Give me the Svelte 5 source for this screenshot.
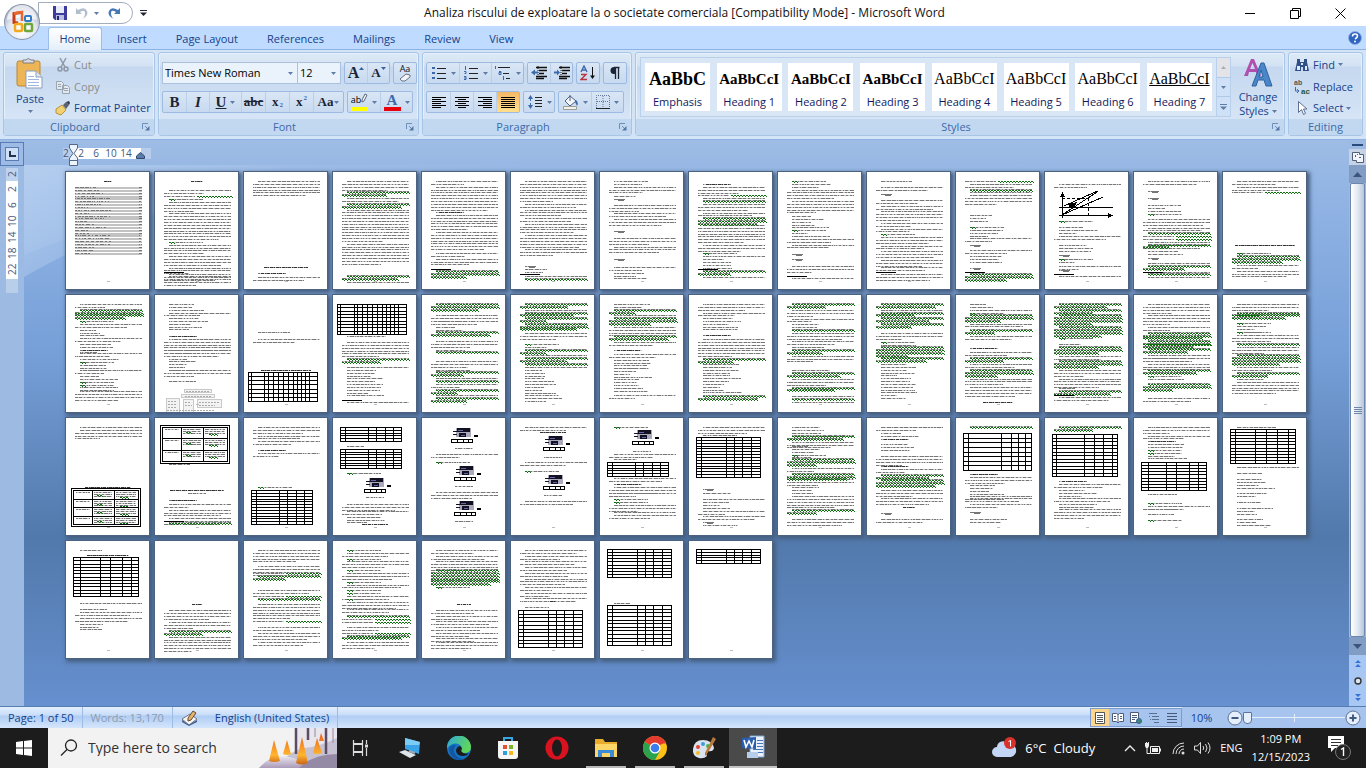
<script lang="ts">
	// Page thumbnails are written as short tokens, top to bottom:
	// @n jump to y, tN paragraph, gN flagged paragraph, rN half flagged line, lN list lines,
	// eN short flagged words, c centred heading, k bold heading, m formula, f footnote rule, aN contents lines
	// T:x:y:w:h:rows:cols table, O:x:y small chart, G graph, D organisation chart
	const pages = [
		'@9 c7 @15 a24',
		'@9 c12 @18 t2 r1 e1 @30 t4 t10 e1 t4 t4 t3 t4 @101 f t3',
		'@9 t6 @95 c44 @101 k @105 t2',
		'@9 t4 g2 t2 g2 t12 t8 @104 g2 t1',
		'@9 t2 t9 @40 k t6 t7 @81 t2 t3 @98 f g3',
		'@9 t8 t2 t3 t2 t4 t5 t3 @94 m l2 @103 f t1 g1',
		'@9 l2 t3 @24 l1 m @33 t3 @41 t2 @47 t3 @59 m @66 t3 t3 @87 m @95 t2 l3',
		'@12 k t3 r1 t1 g1 t3 t2 g3 @53 t7 t3 @81 e1 t1 @87 l4 @98 f g2 t1',
		'@9 e1 l2 t4 t5 @44 l5 e1 l2 t2 t2 @82 m @87 m @94 t3 @105 f t1',
		'@9 l1 @15 t2 @22 m @28 t2 t2 t4 t2 t2 e1 t3 t2 t3 t3 @95 t2 @101 f t3',
		'@9 r1 t2 g1 t1 t4 @43 l3 @55 e1 l3 t2 @73 m @78 t2 @84 l3 @96 m @101 f g3',
		'@12 t2 G @49 e1 @55 l3 @64 t2 @73 l3 @83 m @87 e1 l1 @94 t1 l1 @98 m @103 f t1',
		'@9 t2 @19 m @26 m @33 l3 e1 @47 t3 t2 g1 r2 t1 g2 @73 t2 l2 @86 m @91 t1 g2 t1 @101 f g1 t1',
		'@9 t2 t2 r1 @73 c60 @81 e1 g3 @93 t2 t3',
		'@9 t2 g4 e1 t2 l3 t2 l4 @55 k t2 @64 l1 e1 l3 @75 t2 @81 l2 e2 l2 @96 t4',
		'@9 l3 t2 @23 l5 @41 k t6 @55 t3 l5 @75 t3 @86 l1 D',
		'@37 l1 @44 t2 @75 c50 T:4:77:69:29:7:3,16,20,25,30,35,40,45,49,53,57,61',
		'T:4:9:69:30:9:3,17,20,25,30,35,40,45,49,53,57,61 @41 l1 @47 t6 g2 @72 t1 l10 @106 f t1',
		'@9 g3 @20 t3 @26 t2 l2 g2 @46 t3 l1 g1 @66 t3 l1 g2 t1 g1 @89 t2 g2 t1 g2',
		'@9 g2 t1 g2 @23 g2 g3 @38 t3 @49 e1 l1 g2 t1 g2 g1 @72 t1 l12',
		'@9 l2 g2 t1 g3 t4 @41 g2 t2 @55 k @59 t2 l4 @73 l9 @100 t2',
		'@9 t3 t2 @23 l5 @40 k @44 t7 g2 @69 l11 @101 g2',
		'@9 g2 @15 t3 t2 l2 @35 g1 t3 t2 l1 g2 t3 @75 l1 g2 @84 t3 g2 @101 t1 g1 t1',
		'@9 g2 t1 g2 g2 g2 @38 t3 @47 e1 l1 @52 g4 @63 g2 @69 l13',
		'@9 l2 t1 e1 @20 g3 t2 @35 g2 t2 @53 k @57 t2 @63 g2 t2 @75 g3 t3 @92 t4 @107 c30',
		'@9 g2 g2 @20 g4 @32 g4 e1 @49 l1 @52 g3 @61 t2 @66 g3 @75 t3 t4 @93 l1 g2 @101 f t2',
		'@9 t4 @20 t4 @32 t2 g3 g3 @49 g2 @54 g2 t2 @63 t2 t4 @75 g2 @81 e1 l1 @89 g3 @103 t2',
		'@9 t3 g2 @20 g2 @28 e1 l2 e1 @37 l1 t3 @49 g1 t3 @60 g4 @72 t2 g2 @84 l1 t5',
		'@9 t1 t4 @69 c46 T:7:72:65:34:4:19,41,65',
		'T:7:9:65:34:3:19,41,65 @46 l1 @72 c54 c18 @82 k @86 t2 t3 t3 @104 f g1',
		'@9 t3 t2 @23 t2 @32 k @35 t2 @69 e1 T:7:72:61:34:12:5,28,36,45,53',
		'T:7:9:61:14:5:5,28,36,45,53 @28 l1 T:7:31:61:19:7:5,28,36,45,53 @55 e1 O:36:60 @79 c18 @86 t3 @93 t2 l3 @106 c26',
		'O:34:10 @30 c18 @36 t2 @44 e1 O:37:48 @68 c18 @74 t3 O:37:83 @103 c18',
		'@9 t2 @14 c26 O:37:18 @39 c18 @44 t2 @53 e1 O:37:57 @77 c18 @83 t2',
		'@9 e1 O:37:12 @33 c18 t2 @41 l1 T:7:44:61:14:5:5,28,36,45,53 @60 t2 k @69 t3 @75 t2 e2 @87 t3 @94 t1 @97 t2',
		'@9 t3 @17 l1 T:7:19:64:40:14:5,30,38,46,55 @71 m @75 l1 @81 t1 l3 @93 t2 @98 t2 @104 m l1',
		'@9 l3 t2 @18 g2 t3 @28 l3 e1 l1 @41 g3 @50 t2 g3 @61 t3 @69 l3 @78 t5 g2 @101 t3',
		'@9 t2 l2 @21 k @26 l3 @38 t4 @48 k @51 t2 g2 g3 @72 t3 @80 t3 @89 c12 @95 m @101 t2',
		'@9 g1 T:7:15:68:37:8:5,38,48,55,62 @56 k t3 @67 l4 t2 @80 t2 @86 t2 @94 m @101 l2',
		'@9 g2 T:7:16:65:42:12:4,32,42,51,60 @63 k t2 @72 l3 @80 t2 l2 @91 t4',
		'@9 t3 t2 k l1 @29 l1 e2 l2 T:7:44:65:28:9:7,25,35,48,57 @76 l1 @85 e1 t2 @91 l1 @96 l1 @102 e1',
		'@9 l1 T:7:11:65:34:11:5,25,36,47,58 @49 t1 @55 l1 @61 l4 @75 l2 @84 l1 @90 l3 @101 l3',
		'@9 l1 @14 c42 T:7:16:65:39:12:7,27,37,49,58 @62 t1 @68 l1 @71 t2 @77 t2 l3',
		'@63 c10 @69 t4 @81 t3 @90 g2 t6',
		'@9 t5 @25 t4 @32 r1 g2 @49 t2 r1 g1 @63 t6 r1 @86 t2 @92 t3 @101 t2',
		'@9 e1 t2 e1 t3 @29 e1 t2 @35 t2 e1 t2 e2 t2 @58 e1 t3 @68 t2 @75 g1 r2 @86 t2 r1 g2 @101 t3',
		'@9 t2 t2 t4 @29 g6 e1 @63 c14 @69 t2 t2 t2 t2 t2 t2 @101 t3',
		'@9 t2 t2 t2 t2 t2 t3 t2 t2 t2 @60 c5 @66 l1 T:7:69:64:37:10:5,30,38,46,55',
		'T:7:8:64:28:9:5,30,38,46,55 @62 l1 T:7:64:64:40:11:5,30,38,46,55',
		'T:7:8:64:14:5:5,30,38,46,55'
	];

	function makeRandom(seed: number) {
		let s = seed * 7919 + 17;
		return () => {
			s = (s * 1103515245 + 12345) % 2147483648;
			return s / 2147483648;
		};
	}

	function drawPage(spec: string, index: number) {
		const rnd = makeRandom(index + 1);
		let y = 9;
		let ink = '';
		let soft = '';
		let wave = '';
		let bold = '';
		let band = '';
		let grid = '';
		let graph = false;
		let chart = false;
		const blocks: { x: number; y: number }[] = [];

		const words = (x1: number, x2: number, yy: number) => {
			soft += `M${x1} ${yy + 0.5}H${x2}`;
			let x = x1;
			while (x < x2) {
				const len = 1 + Math.floor(rnd() * 4);
				ink += `M${x} ${yy + 0.5}h${Math.min(len, x2 - x)}`;
				x += len + 1 + Math.floor(rnd() * 2);
			}
		};
		const zigzag = (x1: number, x2: number, yy: number) => {
			for (let x = x1; x < x2; x += 3) wave += `M${x} ${yy + 0.5}h2m0 1h1`;
		};

		for (const token of spec.split(' ')) {
			const kind = token[0];
			if (token.includes(':')) {
				const [, ...args] = token.split(':');
				const [x, ty, w, h, rows] = args.map(Number);
				if (kind === 'O') {
					blocks.push({ x, y: ty });
					continue;
				}
				grid += `M${x}.5 ${ty}.5h${w}v${h}h-${w}z`;
				for (let i = 1; i < rows; i++) grid += `M${x} ${ty + Math.round((h * i) / rows) + 0.5}h${w}`;
				for (const c of args[5].split(',')) grid += `M${x + Number(c) + 0.5} ${ty}v${h}`;
				if (rows < 5) {
					grid += `M${x - 1.5} ${ty - 1.5}h${w + 4}v${h + 4}h-${w + 4}z`;
					for (let i = 0; i < rows; i++) {
						const ry = ty + Math.round((h * i) / rows) + 2;
						words(x + 3, x + 17, ry);
						for (let j = 0; j < 3; j++) words(x + 21, x + 39, ry + j * 2);
						for (let j = 0; j < 3; j++) words(x + 43, x + 63, ry + j * 2);
						zigzag(x + 24, x + 30, ry + 3);
						zigzag(x + 47, x + 54, ry + 5);
					}
				}
				continue;
			}
			const n = Number(token.slice(1)) || 1;
			if (kind === '@') y = n;
			else if (kind === 'G') graph = true;
			else if (kind === 'D') chart = true;
			else if (kind === 'c') {
				words(42 - Math.round(n / 2), 42 + Math.round(n / 2), Math.round(y));
				// page titles are bold, captions under the small charts are not
				if (n !== 18) bold += `M${42 - Math.round(n / 2)} ${Math.round(y) + 0.5}h${n}`;
				y += 2.9;
			} else if (kind === 'k') {
				bold += `M17 ${Math.round(y) + 0.5}h24`;
				words(14, 42, Math.round(y));
				y += 2.9;
			} else if (kind === 'm') {
				words(14, 20, Math.round(y));
				ink += `M17 ${Math.round(y)}h8M18 ${Math.round(y) + 1}h6`;
				y += 2.9;
			} else if (kind === 'f') {
				grid += `M9 ${Math.round(y) - 0.5}h20`;
				y += 1;
			} else {
				for (let i = 0; i < n; i++) {
					const yy = Math.round(y);
					const end = i === n - 1 && n > 1 ? 34 + Math.floor(rnd() * 36) : 76;
					const start = i === 0 ? 14 : 9;
					if (kind === 't') words(start, end, yy);
					else if (kind === 'g') {
						words(start, end, yy - 1);
						zigzag(start, end, yy);
					} else if (kind === 'r') {
						words(9, 40, yy);
						zigzag(42, 76, yy);
					} else if (kind === 'e') {
						words(14, 48, yy);
						zigzag(14, 19, yy);
					} else if (kind === 'l') words(14, 30 + Math.floor(rnd() * 24), yy);
					else if (kind === 'a') {
						band += `M9 ${yy}.5h67`;
						words(9, 22 + Math.floor(rnd() * 24), yy);
						words(73, 76, yy);
					}
					y += 2.85;
				}
			}
		}
		return { ink, soft, wave, bold, band, grid, graph, chart, blocks };
	}

	const thumbs = pages.map(drawPage);

	const tabs = ['Insert', 'Page Layout', 'References', 'Mailings', 'Review', 'View'];
	const styles = [
		{ name: 'Emphasis', sample: 'AaBbC', look: 'big' },
		{ name: 'Heading 1', sample: 'AaBbCcI', look: 'strong' },
		{ name: 'Heading 2', sample: 'AaBbCcI', look: 'strong' },
		{ name: 'Heading 3', sample: 'AaBbCcI', look: 'strong' },
		{ name: 'Heading 4', sample: 'AaBbCcI', look: '' },
		{ name: 'Heading 5', sample: 'AaBbCcI', look: '' },
		{ name: 'Heading 6', sample: 'AaBbCcI', look: '' },
		{ name: 'Heading 7', sample: 'AaBbCcI', look: 'under' }
	];
	const aligns = [
		{ name: 'Align left', d: 'M1 2.5h14M1 4.5h9M1 6.5h14M1 8.5h9M1 10.5h14M1 12.5h9' },
		{ name: 'Center', d: 'M1 2.5h14M4 4.5h8M1 6.5h14M4 8.5h8M1 10.5h14M4 12.5h8' },
		{ name: 'Align right', d: 'M1 2.5h14M6 4.5h9M1 6.5h14M6 8.5h9M1 10.5h14M6 12.5h9' },
		{ name: 'Justify', d: 'M1 2.5h14M1 4.5h14M1 6.5h14M1 8.5h14M1 10.5h14M1 12.5h14' }
	];
</script>

{#snippet arrow()}
	<svg class="arrow" width="5" height="3" viewBox="0 0 5 3" aria-hidden="true"><path d="M0 0h5L2.500 3z" fill="#5f7ca8" /></svg>
{/snippet}

{#snippet launcher()}
	<button class="launcher" aria-label="Open dialog">
		<svg width="8" height="8" viewBox="0 0 8 8"><path d="M.5 6V.5H6M3 3l3 3" stroke="#6e8fb8" fill="none" /><path d="M7.500 3v4.500H3z" fill="#5577a5" /></svg>
	</button>
{/snippet}

<div class="window">
	<header class="titlebar">
		<button class="office" aria-label="Office Button">
			<svg width="38" height="38" viewBox="0 0 38 38">
				<defs>
					<radialGradient id="orb" cx=".5" cy=".75" r=".7"><stop offset="0" stop-color="#fff" /><stop offset=".6" stop-color="#dfe4ee" /><stop offset="1" stop-color="#9aa6bd" /></radialGradient>
				</defs>
				<circle cx="19" cy="19" r="17.500" fill="url(#orb)" stroke="#8792a8" />
				<path d="M4 17a15 15 0 0 1 30 0q-15-5-30 0z" fill="#fff" opacity=".7" />
				<path d="M18 9.500l-7 1v9l4 .5" fill="none" stroke="#c93c17" stroke-width="3" />
				<path d="M11 10.500l8-1.500v9" fill="none" stroke="#e8682e" stroke-width="2.500" />
				<rect x="22" y="13" width="6" height="5" rx="1" fill="#fff" fill-opacity=".6" stroke="#2f7cc4" stroke-width="2" />
				<rect x="12" y="21" width="7" height="7" rx="1" fill="#fff" fill-opacity=".6" stroke="#f2a91c" stroke-width="2.500" />
				<rect x="22" y="21" width="7" height="7" rx="1" fill="#fff" fill-opacity=".6" stroke="#6fa53a" stroke-width="2.500" />
			</svg>
		</button>
		<div class="quick">
			<button aria-label="Save">
				<svg width="14" height="14" viewBox="0 0 14 14"><path d="M0 0h14v14H2L0 12z" fill="#3d3b9c" /><path d="M3 0h8v7H3z" fill="#e8ecfa" /><path d="M3 9h8v5H3z" fill="#b9bfe0" /><path d="M4 10h2v4H4z" fill="#26246e" /></svg>
			</button>
			<button aria-label="Undo" class="undo">
				<svg width="14" height="13" viewBox="0 0 14 13"><path d="M1 1v6h6L5 5q5-3 5 1t-3 6q7-3 5-8T3 3z" fill="#b2bdcd" /></svg>
				{@render arrow()}
			</button>
			<button aria-label="Redo">
				<svg width="14" height="13" viewBox="0 0 14 13"><path d="M13 1v6H7l2-2Q4 2 4 6t3 6Q0 9 2 4t9-1z" fill="#4877b8" /></svg>
			</button>
		</div>
		<button class="customize" aria-label="Customize">
			<svg width="7" height="6" viewBox="0 0 7 6"><path d="M0 .5h7" stroke="#223" /><path d="M0 2.500h7L3.500 6z" fill="#223" /></svg>
		</button>
		<h1>Analiza riscului de exploatare la o societate comerciala [Compatibility Mode] - Microsoft Word</h1>
		<div class="controls">
			<button aria-label="Minimize"><svg width="11" height="11" viewBox="0 0 11 11"><path d="M0 5.500h10" stroke="#000" /></svg></button>
			<button aria-label="Restore"><svg width="11" height="11" viewBox="0 0 11 11"><path d="M.5 2.500h8v8h-8zM2.500 2.500v-2h8v8h-2" stroke="#000" fill="none" /></svg></button>
			<button aria-label="Close"><svg width="11" height="11" viewBox="0 0 11 11"><path d="M.5.5l10 10M10.500.5l-10 10" stroke="#000" /></svg></button>
		</div>
	</header>

	<nav class="tabs">
		<button class="tab active">Home</button>
		{#each tabs as tab}
			<button class="tab">{tab}</button>
		{/each}
		<button class="help" aria-label="Help">
			<svg width="14" height="14" viewBox="0 0 14 14"><circle cx="7" cy="7" r="6.500" fill="#2f63c0" stroke="#8fb0e4" /><path d="M4.500 5.500q0-2.500 2.500-2.500t2.500 2q0 1.500-2.500 3" fill="none" stroke="#fff" stroke-width="1.600" /><circle cx="7" cy="10.500" r="1" fill="#fff" /></svg>
		</button>
	</nav>

	<div class="ribbon">
		<section class="group clipboard">
			<div class="body">
				<button class="tall">
					<svg width="28" height="32" viewBox="0 0 28 32"><rect x="1" y="3" width="23" height="25" rx="2" fill="#edb556" stroke="#b98736" /><path d="M7 5V2h3q2-3 5 0h3v3z" fill="#d8dbe2" stroke="#7e7e85" /><path d="M10 13h10l6 6v11H10z" fill="#fff" stroke="#8a9dbd" /><path d="M20 13v6h6" fill="#dce6f5" stroke="#8a9dbd" /><path d="M12 18.500h6M12 21.500h11M12 24.500h11M12 27.500h11" stroke="#9db7de" /></svg>
					<span>Paste</span>
					{@render arrow()}
				</button>
				<div class="stack">
					<button class="row off">
						<svg width="16" height="16" viewBox="0 0 16 16"><path d="M5 1l5 9M11 1L6 10" stroke="#8d97a6" stroke-width="1.500" /><circle cx="5" cy="12" r="2" fill="none" stroke="#8d97a6" stroke-width="1.500" /><circle cx="11" cy="12" r="2" fill="none" stroke="#8d97a6" stroke-width="1.500" /></svg>
						Cut
					</button>
					<button class="row off">
						<svg width="16" height="16" viewBox="0 0 16 16"><path d="M1.500 2.500h5l2 2v6h-7zM7.500 6.500h5l2 2v6h-7z" fill="#e3e8ef" stroke="#9aa3b1" /><path d="M9 9.500h4M9 11.500h4M3 5.500h3M3 7.500h3" stroke="#9aa3b1" /></svg>
						Copy
					</button>
					<button class="row">
						<svg width="16" height="16" viewBox="0 0 16 16"><path d="M1 9l6-4 4 5-5 5-5-2z" fill="#f1d173" stroke="#b9923a" /><path d="M8 5l3-3 3 3-3 4z" fill="#59606e" /><path d="M11 2l3-1 1 2-1 2z" fill="#353b4b" /></svg>
						Format Painter
					</button>
				</div>
			</div>
			<footer><h2>Clipboard</h2>{@render launcher()}</footer>
		</section>

		<section class="group font">
			<div class="body rows">
				<div class="line">
					<div class="combos">
						<label class="combo face"><select aria-label="Font"><option>Times New Roman</option></select>{@render arrow()}</label>
						<label class="combo size"><select aria-label="Font size"><option>12</option></select>{@render arrow()}</label>
					</div>
					<div class="set">
						<button class="w22 serif grow" aria-label="Grow font">A<svg width="5" height="3" viewBox="0 0 5 3"><path d="M0 3h5L2.500 0z" fill="#3b62a0" /></svg></button>
						<button class="w22 serif shrink" aria-label="Shrink font">A<svg width="5" height="3" viewBox="0 0 5 3"><path d="M0 0h5L2.500 3z" fill="#3b62a0" /></svg></button>
					</div>
					<div class="set">
						<button class="w22 clear" aria-label="Clear formatting"><span>Aa</span><svg width="12" height="9" viewBox="0 0 12 9"><path d="M1 6l6-5 4 1v2L6 8H3z" fill="#f4f4f8" stroke="#667087" /></svg></button>
					</div>
				</div>
				<div class="line">
					<div class="set">
						<button class="w23 serif"><b>B</b></button>
						<button class="w23 serif"><i>I</i></button>
						<button class="w33 serif"><u>U</u>{@render arrow()}</button>
						<button class="w24 serif small"><s>abc</s></button>
						<button class="w24 serif small">x<sub>2</sub></button>
						<button class="w24 serif small">x<sup>2</sup></button>
						<button class="w30 serif small">Aa{@render arrow()}</button>
					</div>
					<div class="set">
						<button class="w33 mark" aria-label="Highlight">
							<span class="swatch ab">ab<svg width="7" height="10" viewBox="0 0 7 10"><path d="M1 7l3-6 2 1-3 6-2 1z" fill="#fff" stroke="#5a6478" /></svg></span>
							{@render arrow()}
						</button>
						<button class="w33 mark" aria-label="Font color">
							<span class="swatch letter">A</span>
							{@render arrow()}
						</button>
					</div>
				</div>
			</div>
			<footer><h2>Font</h2>{@render launcher()}</footer>
		</section>

		<section class="group para">
			<div class="body rows">
				<div class="line">
					<div class="set">
						<button class="w33" aria-label="Bullets"><svg width="16" height="16" viewBox="0 0 16 16"><path d="M1 2h3v2H1zM1 7h3v2H1zM1 12h3v2H1z" fill="#3d69ab" /><path d="M6 3.500h9M6 8.500h9M6 13.500h9" stroke="#222" /></svg>{@render arrow()}</button>
						<button class="w33" aria-label="Numbering"><svg width="16" height="16" viewBox="0 0 16 16"><path d="M2.500 1v4M1 6.500h2v2H1.500M1 11.500h2v3H1M1 13h2" stroke="#3d69ab" fill="none" /><path d="M6 3.500h9M6 8.500h9M6 13.500h9" stroke="#222" /></svg>{@render arrow()}</button>
						<button class="w33" aria-label="Multilevel list"><svg width="18" height="16" viewBox="0 0 18 16"><path d="M1.500 1v3M5 6.500h2v3H5v-2h2M9.500 11v4" stroke="#3d69ab" fill="none" /><path d="M4 2.500h12M9 8.500h6M12 13.500h4" stroke="#222" /></svg>{@render arrow()}</button>
					</div>
					<div class="set">
						<button class="w22" aria-label="Decrease indent"><svg width="16" height="16" viewBox="0 0 16 16"><path d="M5 2.500h11M8 5.500h8M8 8.500h5M5 11.500h11M5 13.500h8" stroke="#111" stroke-width="1.500" /><path d="M7 1v14" stroke="#111" stroke-dasharray="1 1" /><path d="M0 7.500l4-3v2h3v2H4v2z" fill="#3d69ab" /></svg></button>
						<button class="w22" aria-label="Increase indent"><svg width="16" height="16" viewBox="0 0 16 16"><path d="M5 2.500h11M8 5.500h8M8 8.500h5M5 11.500h11M5 13.500h8" stroke="#111" stroke-width="1.500" /><path d="M7 1v14" stroke="#111" stroke-dasharray="1 1" /><path d="M6 7.500l-3-3v2H0v2h3v2z" fill="#3d69ab" /></svg></button>
					</div>
					<div class="set">
						<button class="w22" aria-label="Sort"><svg width="16" height="16" viewBox="0 0 16 16"><path d="M1 7l3-6 3 6M2 5h4" stroke="#3d69ab" stroke-width="1.400" fill="none" /><path d="M1 9.500h5l-5 5h6" stroke="#b7353d" stroke-width="1.400" fill="none" /><path d="M12.500 2v11" stroke="#111" /><path d="M10 10.500h5L12.500 14z" fill="#111" /></svg></button>
					</div>
					<div class="set">
						<button class="w22" aria-label="Show marks"><svg width="12" height="14" viewBox="0 0 12 14"><path d="M10.500 1.500H5M6.500 1v12M9.500 1v12" stroke="#1b2536" stroke-width="1.300" fill="none" /><path d="M6 1H5a3.500 3.500 0 0 0 0 7h1z" fill="#1b2536" /></svg></button>
					</div>
				</div>
				<div class="line">
					<div class="set">
						{#each aligns as align, i}
							<button class="w23" class:on={i === 3} aria-label={align.name}><svg width="16" height="15" viewBox="0 0 16 15"><path d={align.d} stroke="#000" /></svg></button>
						{/each}
					</div>
					<div class="set">
						<button class="w30" aria-label="Line spacing"><svg width="16" height="16" viewBox="0 0 16 16"><path d="M3.500 3v10" stroke="#3d69ab" stroke-dasharray="4 2" /><path d="M1 5l2.500-4L6 5zM1 11l2.500 4L6 11z" fill="#3d69ab" /><path d="M8 3.500h7M8 6.500h7M8 9.500h7M8 12.500h7" stroke="#222" /></svg>{@render arrow()}</button>
					</div>
					<div class="set">
						<button class="w33" aria-label="Shading"><svg width="17" height="16" viewBox="0 0 17 16"><path d="M3 7l5-5 6 5-6 5z" fill="#f3f6fb" stroke="#4d6080" /><path d="M8 1v6" stroke="#4d6080" /><path d="M14 6q3 3 1 6l-2-4z" fill="#3d69ab" /><path d="M1.500 12.500h13v3h-13z" fill="#f2f2ea" stroke="#9a9f9a" /></svg>{@render arrow()}</button>
						<button class="w33" aria-label="Borders"><svg width="14" height="14" viewBox="0 0 14 14"><path d="M.5 13V.5h13V13M7 1v12M1 6.500h12" stroke="#66789a" stroke-dasharray="1 1" fill="none" /><path d="M0 13.500h14" stroke="#222" /></svg>{@render arrow()}</button>
					</div>
				</div>
			</div>
			<footer><h2>Paragraph</h2>{@render launcher()}</footer>
		</section>

		<section class="group styles">
			<div class="body">
				<div class="gallery">
					<div class="tiles">
						{#each styles as style}
							<button class="tile"><span class="sample {style.look}">{style.sample}</span><span class="name">{style.name}</span></button>
						{/each}
					</div>
					<div class="steps">
						<button class="dim" aria-label="Previous"><svg width="5" height="3" viewBox="0 0 5 3"><path d="M0 3h5L2.500 0z" fill="#a5adb8" /></svg></button>
						<button aria-label="Next">{@render arrow()}</button>
						<button aria-label="More"><svg width="7" height="6" viewBox="0 0 7 6"><path d="M0 .5h7" stroke="#5f7ca8" /><path d="M0 2.500h7L3.500 6z" fill="#5f7ca8" /></svg></button>
					</div>
				</div>
				<button class="tall change">
					<svg width="30" height="30" viewBox="0 0 30 30"><path d="M1 18L8 1h3l7 17h-4l-1-4H6l-1 4zM7 11h5L9.500 5z" fill="#b14fb0" fill-rule="evenodd" /><path d="M9 28L18 5h3l8 23h-6l-2-6h-6l-2 6zM16 19h4l-2-7z" fill="#4b86c8" stroke="#2f62a0" fill-rule="evenodd" /></svg>
					<span>Change</span>
					<span>Styles {@render arrow()}</span>
				</button>
			</div>
			<footer><h2>Styles</h2>{@render launcher()}</footer>
		</section>

		<section class="group editing">
			<div class="body">
				<div class="stack">
					<button class="row"><svg width="16" height="16" viewBox="0 0 16 16"><path d="M3 2h3v3h4V2h3v3l2 9H9v-4H7v4H1l2-9z" fill="#2f4f86" /><path d="M3 9h3v4H3zM11 9h2v4h-2zM7 6h2v2H7z" fill="#dfe9f8" /></svg>Find {@render arrow()}</button>
					<button class="row"><svg width="16" height="16" viewBox="0 0 16 16"><text x="0" y="6" font-size="7" font-weight="bold" font-family="Liberation Sans, sans-serif" fill="#555">ab</text><text x="7" y="15" font-size="8" font-weight="bold" font-family="Liberation Sans, sans-serif" fill="#27573a">ac</text><path d="M1.500 8v4H5M3 10l2 2-2 2" stroke="#3d69ab" fill="none" /></svg>Replace</button>
					<button class="row"><svg width="16" height="16" viewBox="0 0 16 16"><path d="M4.500 1.500v11l3-3 2 5 2-1-2-4.500h3.500z" fill="#fff" stroke="#5b6f92" /></svg>Select {@render arrow()}</button>
				</div>
			</div>
			<footer><h2>Editing</h2></footer>
		</section>
	</div>

	<main class="work">
		<aside class="side">
			<button class="corner" aria-label="Tab stop"><svg width="7" height="6" viewBox="0 0 7 6"><path d="M1 0v5h6" stroke="#23324d" stroke-width="2" fill="none" /></svg></button>
			<div class="vruler">
				<span class="margin">2</span>
				<div class="scale"><span>2</span><span>6</span><span>10</span><span>14</span><span>18</span><span>22</span></div>
				<span class="tail"></span>
			</div>
		</aside>

		<div class="canvas">
			<svg class="swoosh" viewBox="0 0 500 540" preserveAspectRatio="none" aria-hidden="true">
				<defs>
					<linearGradient id="glow" x1="0" y1="0" x2="1" y2=".3"><stop offset="0" stop-color="#c6dbf5" stop-opacity=".5" /><stop offset=".5" stop-color="#b8d0f0" stop-opacity=".3" /><stop offset="1" stop-color="#b8d0f0" stop-opacity="0" /></linearGradient>
				</defs>
				<path d="M0 0H260Q90 60 0 112z" fill="url(#glow)" />
				<path d="M0 0H500Q160 20 0 90z" fill="url(#glow)" opacity=".5" />
			</svg>
			<div class="hruler">
				<span class="edge">2</span>
				<div class="scale"><span>2</span><span>6</span><span>10</span><span>14</span></div>
				<span class="edge"></span>
				<svg class="indent" width="9" height="22" viewBox="0 0 9 22"><path d="M.5.500h8V4L5 9.500 8.500 14v7.500h-8V14L4 9.500.5 4zM.5 16.500h8" fill="#eef4fc" stroke="#55688a" /></svg>
				<svg class="right-indent" width="9" height="7" viewBox="0 0 9 7"><path d="M.5 6.500V4l4-3.500 4 3.500v2.500z" fill="#5b7ba8" stroke="#33486b" /></svg>
			</div>
			<div class="pages">
				{#each thumbs as t}
					<svg class="page" width="83" height="117" viewBox="0 0 83 117" role="img" aria-label="Page">
						<path d={t.band} stroke="#c2c2c2" stroke-width="2" />
						<path d={t.soft} stroke="#c6c6c6" />
						<path d={t.ink} stroke="#767676" />
						<path d={t.bold} stroke="#333" stroke-dasharray="3 1 1 1" />
						<path d={t.wave} stroke="#0a700a" />
						<path d={t.grid} stroke="#000" fill="none" />
						{#each t.blocks as b}
							<g transform="translate({b.x} {b.y})">
								<path d="M0 0h15v9H0z" fill="#aab" />
								<path d="M1 0h13v4H1zM3 5h7v4H3z" fill="#112" />
								<path d="M-3 3.500h4M-3 6.500h4" stroke="#112" />
								<path d="M2 2.500h5M5 7.500h4" stroke="#66a" />
								<path d="M18 7h4v2h-4z" fill="#000" />
								<path d="M-4.500 11.500h21v3h-21zM1.500 11.500v3M7.500 11.500v3M12.500 11.500v3" fill="none" stroke="#000" />
							</g>
						{/each}
						{#if t.graph}
							<path d="M17.500 21v25M14 43.500h53M14 35.500h54M17 43L52 20M17 43L58 25M19 34L48 21" stroke="#000" fill="none" />
							<path d="M15 25l2.500-5 2.500 5zM63 41l5 2.500-5 2.500zM47 20l6-1-3 4zM24 32l8-2-2 4-6 2z" fill="#000" />
							<path d="M17 26.500h26v17" stroke="#000" stroke-dasharray="3 2" fill="none" />
						{/if}
						{#if t.chart}
							<path d="M29.500 94.500h27v3h-27zM26.500 99.500h33v3h-33zM11.500 103.500h13v14h-13zM28.500 104.500h10v13h-10zM42.500 104.500h24v8h-24z" stroke="#c9c9c9" fill="#f3f3f3" />
							<path d="M31 96h23M30 101h26M13 106h9M13 109h8M13 112h9M30 107h6M30 110h7M44 107h20M44 110h16M12 115h48" stroke="#aaa" stroke-dasharray="2 1" />
						{/if}
						<path d="M41 109.500h3" stroke="#bbb" />
					</svg>
				{/each}
			</div>
		</div>

		<aside class="scroll">
			<div class="split"></div>
			<button class="toggle" aria-label="View ruler"><svg width="12" height="12" viewBox="0 0 12 12"><path d="M.5 1.500h7v2h4v8h-7v-2h-4zM3.500 4v2M5 3.500h1M7 6.500h2" fill="#f2f6fc" stroke="#50607c" /></svg></button>
			<button class="step" aria-label="Scroll up"><svg width="9" height="5" viewBox="0 0 9 5"><path d="M0 5h9L4.500 0z" fill="#3c5480" /></svg></button>
			<div class="thumb"><i></i><i></i><i></i><i></i></div>
			<button class="step" aria-label="Scroll down"><svg width="9" height="5" viewBox="0 0 9 5"><path d="M0 0h9L4.500 5z" fill="#3c5480" /></svg></button>
			<button class="browse" aria-label="Previous page"><svg width="6" height="7" viewBox="0 0 6 7"><path d="M0 3h6L3 0zM0 7h6L3 4z" fill="#3474d8" /></svg></button>
			<button class="browse" aria-label="Browse object"><svg width="8" height="8" viewBox="0 0 8 8"><circle cx="4" cy="4" r="3" fill="#dde5f0" stroke="#333" stroke-width="1.400" /></svg></button>
			<button class="browse" aria-label="Next page"><svg width="6" height="7" viewBox="0 0 6 7"><path d="M0 0h6L3 3zM0 4h6L3 7z" fill="#3474d8" /></svg></button>
		</aside>
	</main>

	<div class="status">
		<button>Page: 1 of 50</button>
		<button class="muted">Words: 13,170</button>
		<button class="lang">
			<svg width="18" height="16" viewBox="0 0 18 16"><path d="M1 9l8-5 7 5-8 6z" fill="#f4f4f4" stroke="#6d7686" /><path d="M1 10l7 5 8-5v2l-8 4-7-4z" fill="#405b8b" /><path d="M7 8l5-7 3 2-5 7-3 1z" fill="#e8b26c" stroke="#5d4a31" /></svg>
			English (United States)
		</button>
		<div class="views">
			<button class="on" aria-label="Print layout"><svg width="12" height="12" viewBox="0 0 12 12"><path d="M1.500.5h9v11h-9z" fill="#fff" stroke="#555" /><path d="M3 3.500h6M3 5.500h6M3 7.500h6M3 9.500h6" stroke="#555" /></svg></button>
			<button aria-label="Full screen reading"><svg width="12" height="12" viewBox="0 0 12 12"><path d="M.5 1.500h4l1.500 1 1.500-1h4v8h-4L6 11l-1.500-1.500h-4zM6 2v9" fill="#fff" stroke="#4c5c77" /><path d="M2 4.500h2M2 6.500h2M8 4.500h2M8 6.500h2" stroke="#4c5c77" /></svg></button>
			<button aria-label="Web layout"><svg width="12" height="12" viewBox="0 0 12 12"><path d="M.5.5h8v10h-8z" fill="#fff" stroke="#4c5c77" /><path d="M2 3.500h5M2 5.500h5M2 7.500h3" stroke="#4c5c77" /><circle cx="9" cy="9" r="2.500" fill="#3b8a6d" stroke="#3760a0" /></svg></button>
			<button aria-label="Outline"><svg width="12" height="12" viewBox="0 0 12 12"><path d="M1 1.500h8M4 4.500h7M4 7.500h7M6 10.500h5M1 4.500h1M2 7.500h1" stroke="#59708f" /></svg></button>
			<button aria-label="Draft"><svg width="12" height="12" viewBox="0 0 12 12"><path d="M1 1.500h10M1 4.500h10M1 7.500h10M1 10.500h10" stroke="#46597a" /></svg></button>
		</div>
		<button class="percent">10%</button>
		<div class="zoom">
			<button aria-label="Zoom out"><svg width="16" height="16" viewBox="0 0 16 16"><circle cx="8" cy="8" r="7" fill="#e4eefc" stroke="#5d7397" /><path d="M4.500 8h7" stroke="#41587f" stroke-width="2" /></svg></button>
			<input type="range" min="10" max="500" value="10" aria-label="Zoom" />
			<button aria-label="Zoom in"><svg width="16" height="16" viewBox="0 0 16 16"><circle cx="8" cy="8" r="7" fill="#e4eefc" stroke="#5d7397" /><path d="M4.500 8h7M8 4.500v7" stroke="#41587f" stroke-width="2" /></svg></button>
		</div>
	</div>

	<div class="taskbar">
		<button class="start" aria-label="Start"><svg width="16" height="16" viewBox="0 0 16 16"><path d="M0 2l7-1v6.500H0zM8 1l8-1v7.500H8zM0 8.500h7V15l-7-1zM8 8.500h8V16l-8-1z" fill="#fff" /></svg></button>
		<label class="search">
			<svg width="18" height="18" viewBox="0 0 18 18"><circle cx="11" cy="6.500" r="5.500" fill="none" stroke="#222" stroke-width="1.300" /><path d="M7 10.500l-6 6" stroke="#222" stroke-width="1.300" /></svg>
			<input type="text" placeholder="Type here to search" aria-label="Search" />
			<svg class="scene" width="78" height="40" viewBox="0 0 78 40">
				<defs>
					<linearGradient id="tent" x1="0" y1="0" x2="0" y2="1"><stop offset="0" stop-color="#e8601c" /><stop offset=".7" stop-color="#ffb52e" /><stop offset="1" stop-color="#c8641c" /></linearGradient>
					<linearGradient id="snow" x1="0" y1="0" x2="0" y2="1"><stop offset="0" stop-color="#e9e6ef" /><stop offset="1" stop-color="#a99bb8" /></linearGradient>
				</defs>
				<path d="M36 0h42v40H36z" fill="#e9e5ed" />
				<path d="M18 40Q30 22 46 20T78 10v30z" fill="#c7c2d2" />
				<path d="M0 40q14-16 34-10t26 10z" fill="url(#snow)" />
				<path d="M40 40q14-14 38-14v14z" fill="#958aa6" />
				<path d="M37 0v26M49 0v12M67 0v26" stroke="#5b4c66" stroke-width="2.500" />
				<path d="M56 0v9M74 0v15" stroke="#9487a0" />
				<path d="M15 12l6 21q-6 2-11 0zM43 9l6 26q-6 3-12 0zM28 12l4 14q-4 2-8 0zM58 10l5 15q-5 2-9 0zM62 5l3 8h-5z" fill="url(#tent)" />
			</svg>
		</label>
		<nav class="apps">
			<button aria-label="Task View"><svg width="18" height="16" viewBox="0 0 18 16"><path d="M1.500 0v3.500h9V0M1.500 16v-3.500h9V16M1.500 4.500h9v7h-9zM14.500 0v4M14.500 8v8" fill="none" stroke="#ddd" stroke-width="1.200" /><path d="M13 4.500h3v3h-3z" fill="#ddd" /></svg></button>
			<button aria-label="Remote Desktop"><svg width="24" height="24" viewBox="0 0 24 24"><path d="M7 2l15 4-1 12-14-5z" fill="#3ba4e8" /><path d="M7 2l15 4-1 3L7 9z" fill="#7bcbf5" /><path d="M1 16l6-2 11 5-6 3z" fill="#dfe5ea" /><path d="M11 15l6 2" stroke="#9ab" stroke-width="2" /></svg></button>
			<button aria-label="Edge">
				<svg width="24" height="24" viewBox="0 0 24 24">
					<defs>
						<linearGradient id="edge-top" x1="0" y1="0" x2="1" y2=".4"><stop offset="0" stop-color="#2fa8dd" /><stop offset="1" stop-color="#5fd65a" /></linearGradient>
					</defs>
					<circle cx="12" cy="12" r="12" fill="#1573c6" />
					<path d="M0 12A12 12 0 0 1 24 11q0 6-7 6-4 0-3-2 2-3-1-6-6-4-13 3z" fill="url(#edge-top)" />
					<path d="M9 9q-4 4-1 9t10 5Q8 26 3 18 0 9 9 9z" fill="#1456a0" />
					<path d="M14 15q2-3-1-5-4 1-4 5 1 5 7 5 4 0 6-3-5 2-8-2z" fill="#1c1c1c" />
				</svg>
			</button>
			<button aria-label="Microsoft Store"><svg width="24" height="24" viewBox="0 0 24 24"><path d="M8 6V2h8v4" fill="none" stroke="#36a5e2" stroke-width="2" /><path d="M2 5h20v15q0 3-3 3H5q-3 0-3-3z" fill="#f5f5f5" /><path d="M7 9h4v4H7z" fill="#e8502d" /><path d="M13 9h4v4h-4z" fill="#79b52b" /><path d="M7 15h4v4H7z" fill="#2aa0dd" /><path d="M13 15h4v4h-4z" fill="#f6b818" /></svg></button>
			<button aria-label="Opera"><svg width="24" height="24" viewBox="0 0 24 24"><circle cx="12" cy="12" r="11.500" fill="#d9121f" /><ellipse cx="12" cy="12" rx="5" ry="8.500" fill="#1c1c1c" /></svg></button>
			<button class="open" aria-label="File Explorer"><svg width="24" height="24" viewBox="0 0 24 24"><path d="M1 3h8l2 3h12v15H1z" fill="#e9ab2b" /><path d="M1 8h22v13H1z" fill="#fcd768" /><path d="M4 14h16v7h-4v-4H8v4H4z" fill="#3c8bd8" /></svg></button>
			<button class="open" aria-label="Chrome"><svg width="24" height="24" viewBox="0 0 24 24"><circle cx="12" cy="12" r="12" fill="#fbc116" /><path d="M12 12L1.600 6A12 12 0 0 1 22.400 6z" fill="#e33b2e" /><path d="M12 12L1.600 6A12 12 0 0 0 12 24l5-9z" fill="#2ba24c" /><path d="M7 6h15.400l.6 1.500H12z" fill="#e33b2e" /><circle cx="12" cy="12" r="5.500" fill="#fff" /><circle cx="12" cy="12" r="4.300" fill="#3b7ded" /></svg></button>
			<button class="open" aria-label="Paint"><svg width="26" height="24" viewBox="0 0 26 24"><path d="M2 13Q3 4 12 4t11 8q-1 4-6 3-3 1-1 5-3 3-8 2-7-2-6-9z" fill="#dbe3ec" /><circle cx="7" cy="11" r="2" fill="#e5423b" /><circle cx="12" cy="8" r="2" fill="#3c9de0" /><circle cx="17" cy="10" r="2" fill="#4db34e" /><circle cx="7" cy="17" r="2" fill="#f3bd28" /><path d="M22 1l3 2-9 15-2 2v-3z" fill="#b77a3c" /></svg></button>
			<button class="current" aria-label="Word"><svg width="24" height="24" viewBox="0 0 24 24"><path d="M9 1h14v21H9z" fill="#eaf1fa" stroke="#7fa3d4" /><path d="M16 5.500h6M16 8.500h6M16 11.500h6M12 14.500h10M12 17.500h10" stroke="#4675b8" /><path d="M1 3l14-1v12L1 13z" fill="#2b5fae" /><path d="M3 5l2 7 3-6 3 6 2-7" fill="none" stroke="#fff" stroke-width="1.600" /><path d="M6 17h11v6H6z" fill="#b8cdea" /></svg></button>
		</nav>
		<div class="tray">
			<button class="weather">
				<svg width="27" height="22" viewBox="0 0 27 22"><path d="M6 20a5 5 0 0 1 0-10 6 6 0 0 1 11-3 6 6 0 0 1 3 13z" fill="#c4d6f5" /><circle cx="19" cy="6" r="6" fill="#d8322b" /><path d="M17.500 4.500l2-1v6" stroke="#fff" fill="none" /></svg>
				<span>6°C</span><span>Cloudy</span>
			</button>
			<button aria-label="Hidden icons"><svg width="12" height="7" viewBox="0 0 12 7"><path d="M1 6l5-5 5 5" stroke="#eee" fill="none" stroke-width="1.300" /></svg></button>
			<button aria-label="Battery"><svg width="17" height="13" viewBox="0 0 17 13"><path d="M5.500 4.500h9v7h-9zM15.500 6.500v3" stroke="#eee" fill="none" /><path d="M7 6h6v4H7zM0 1h4v3l-1 2H1L0 4z" fill="#eee" /><path d="M2 6v5.500h3M1.500 0v2M3.500 0v2" stroke="#eee" fill="none" /></svg></button>
			<button aria-label="Network"><svg width="14" height="14" viewBox="0 0 14 14"><path d="M2 13A11 11 0 0 1 13 2M5 13a8 8 0 0 1 8-8M8 13a5 5 0 0 1 5-5" stroke="#ddd" fill="none" /><circle cx="12" cy="12" r="1.500" fill="#ddd" /></svg></button>
			<button aria-label="Volume"><svg width="17" height="14" viewBox="0 0 17 14"><path d="M.5 5h3l3-3.500v11L3.500 9h-3zM9 5q1.500 2 0 4M11.500 3q3 4 0 8M14 1.500q4 5.500 0 11" stroke="#ddd" fill="none" /></svg></button>
			<button class="text">ENG</button>
			<button class="clock"><span>1:09 PM</span><span>12/15/2023</span></button>
			<button aria-label="Notifications"><svg width="24" height="26" viewBox="0 0 24 26"><path d="M1 1h16v12H8l-4 4v-4H1z" fill="#fff" /><path d="M4 4.500h10M4 7.500h10M4 10.500h7" stroke="#333" /><circle cx="16" cy="17" r="7.500" fill="#222" stroke="#777" /><path d="M14 14.500l2.500-1.500v8" stroke="#fff" stroke-width="1.400" fill="none" /></svg></button>
		</div>
	</div>
</div>

<style>
	:global(body) {
		margin: 0;
		font: 11px/16px 'Open Sans', 'Noto Sans', sans-serif;
		color: #15428b;
	}

	button,
	input,
	select {
		margin: 0;
		padding: 0;
		border: 0;
		background: none;
		font: inherit;
		color: inherit;
	}

	button {
		display: flex;
		align-items: center;
		justify-content: center;
	}

	svg {
		display: block;
		flex: none;
	}

	h1,
	h2 {
		margin: 0;
		font: inherit;
	}

	.window {
		display: flex;
		flex-direction: column;
		min-height: 100vh;
		background: #bfdbff;
	}

	.titlebar {
		position: relative;
		display: flex;
		align-items: center;
		height: 26px;
		background: #fff;
	}

	.office {
		position: absolute;
		left: 3px;
		top: 3px;
		z-index: 2;
	}

	.quick {
		display: flex;
		align-items: center;
		gap: 8px;
		height: 22px;
		margin-left: 38px;
		padding: 0 11px 0 14px;
		border: 1px solid #a3adbb;
		border-radius: 0 11px 11px 0;
		box-sizing: border-box;
	}

	.undo {
		gap: 5px;
	}

	.customize {
		margin-left: 7px;
	}

	h1 {
		flex: 1;
		padding-right: 6px;
		text-align: center;
		font-size: 12px;
		color: #111;
		white-space: nowrap;
	}

	.controls {
		display: flex;
		padding-right: 3px;
	}

	.controls button {
		width: 45px;
		height: 26px;
	}

	.tabs {
		display: flex;
		gap: 1px;
		height: 24px;
		padding-left: 48px;
		background: #bfdbff;
		border-bottom: 1px solid #8db2e3;
		box-sizing: border-box;
	}

	.tab {
		padding: 2px 14px 0;
	}

	.tab.active {
		width: 54px;
		height: 23px;
		padding: 0;
		margin-top: 1px;
		border: 1px solid #9dbce6;
		border-bottom: 0;
		border-radius: 3px 3px 0 0;
		background: linear-gradient(#fff, #e4effb);
		box-sizing: border-box;
	}

	.help {
		margin-left: auto;
		padding-right: 4px;
	}

	.ribbon {
		display: flex;
		gap: 3px;
		height: 90px;
		padding: 2px 3px 3px;
		background: #d3e4f7;
		border-bottom: 1px solid #8db2e3;
		box-sizing: border-box;
	}

	.group {
		display: flex;
		flex-direction: column;
		border: 1px solid #a9c5e6;
		border-radius: 3px;
		background: linear-gradient(#dde9f6 0, #d3e2f3 16%, #c5d8ef 17%, #dbe8f8 100%);
		box-shadow: inset 0 0 0 1px #e6f0fb;
		box-sizing: border-box;
	}

	.group .body {
		display: flex;
		flex: 1;
		min-height: 0;
		padding: 0 3px;
	}

	.group footer {
		display: flex;
		align-items: center;
		height: 16px;
		padding: 0 4px;
		background: #c1d8f0;
		color: #3e6aaa;
	}

	.group h2 {
		flex: 1;
		text-align: center;
	}

	.clipboard {
		width: 152px;
	}

	.font {
		width: 261px;
	}

	.para {
		width: 210px;
	}

	.styles {
		flex: 1;
		min-width: 0;
	}

	.editing {
		width: 75px;
	}

	.tall {
		flex-direction: column;
		justify-content: flex-start;
		width: 46px;
		padding-top: 5px;
	}

	.tall > .arrow {
		margin-top: 4px;
	}

	.tall span {
		display: flex;
		align-items: center;
		gap: 3px;
		line-height: 14px;
	}

	.tall > svg:first-child {
		margin-bottom: 2px;
	}

	.stack {
		display: flex;
		flex-direction: column;
		padding: 1px 0 0 2px;
	}

	.row {
		justify-content: flex-start;
		gap: 3px;
		height: 22px;
		white-space: nowrap;
	}

	.off {
		color: #8d8d8d;
	}

	.group .rows {
		flex-direction: column;
		gap: 7px;
		padding-top: 9px;
	}

	.line {
		display: flex;
		gap: 3px;
	}

	.combos {
		display: flex;
	}

	.combo {
		position: relative;
		display: flex;
		height: 20px;
		border: 1px solid #abc1de;
		background: #eaf2fb;
	}

	.combo select {
		width: 100%;
		padding-left: 2px;
		appearance: none;
		color: #000;
	}

	.combo .arrow {
		position: absolute;
		right: 4px;
		top: 9px;
	}

	.face {
		width: 134px;
	}

	.size {
		width: 42px;
		border-left: 0;
	}

	.set {
		display: flex;
		height: 20px;
		border: 1px solid #9dbbe0;
		border-radius: 2px;
		background: linear-gradient(#d9e6f5, #c8daf0);
	}

	.set button {
		gap: 4px;
		box-sizing: border-box;
	}

	.set button + button {
		border-left: 1px solid #b9cfe9;
	}

	.w22 { width: 22px; }
	.w23 { width: 23px; }
	.w24 { width: 24px; }
	.w30 { width: 30px; }
	.w33 { width: 32px; }

	.serif {
		font: bold 15px/18px 'Liberation Serif', serif;
		color: #1b2536;
	}

	.set .serif.small {
		font-size: 13px;
		gap: 1px;
	}

	.small sub,
	.small sup {
		font-size: 7px;
		line-height: 7px;
		color: #3d69ab;
	}

	.small sub {
		align-self: flex-end;
		margin-bottom: 3px;
	}

	.small sup {
		align-self: flex-start;
		margin-top: 3px;
	}

	.set .grow,
	.set .shrink {
		gap: 0;
	}

	.grow { font-size: 16px; }
	.shrink { font-size: 13px; }

	.grow svg,
	.shrink svg {
		align-self: flex-start;
		margin-top: 4px;
	}

	.set .clear {
		flex-direction: column;
		gap: 0;
		font-size: 9px;
		line-height: 8px;
		color: #111;
	}

	.swatch {
		display: flex;
		justify-content: center;
		width: 17px;
		line-height: 14px;
		border-bottom: 4px solid #ff0;
	}

	.ab {
		font-size: 9px;
		color: #000;
	}

	.letter {
		border-color: #e8000d;
		font: bold 15px/14px 'Liberation Serif', serif;
		color: #3d69ab;
	}

	.set .on {
		background: linear-gradient(#f5b765, #ffdf8c);
	}

	.gallery {
		display: flex;
		flex: 1;
		min-width: 0;
		height: 60px;
		margin: 4px 4px 0 1px;
		border: 1px solid #b9d0ed;
		background: #d8e6f6;
		box-sizing: border-box;
	}

	.tiles {
		display: flex;
		flex: 1;
		justify-content: space-between;
		align-items: center;
		min-width: 0;
		padding: 0 4px;
	}

	.tile {
		flex-direction: column;
		justify-content: flex-end;
		width: 65px;
		height: 48px;
		padding-bottom: 1px;
		background: #fff;
		box-sizing: border-box;
		color: #10195e;
	}

	.sample {
		width: 61px;
		height: 20px;
		margin-bottom: 5px;
		font: 16px/20px 'Liberation Serif', serif;
		color: #000;
	}

	.strong {
		font-weight: bold;
		font-size: 15px;
	}

	.big {
		font-weight: bold;
		font-size: 18px;
	}

	.under {
		text-decoration: underline;
	}

	.steps {
		display: flex;
		flex-direction: column;
		width: 13px;
		border-left: 1px solid #b9d0ed;
	}

	.steps button {
		flex: 1;
		background: #cfe1f7;
	}

	.steps button + button {
		border-top: 1px solid #b0c9e8;
	}

	.steps .dim {
		background: #e4e4e8;
	}

	.work {
		display: flex;
		flex: 1;
		background: linear-gradient(#9ebce4 0, #91b4e4 10%, #769fd8 38%, #5279ab 70%, #6690cf 100%);
	}

	.side {
		width: 24px;
		background: #9dbae2;
	}

	.corner {
		width: 24px;
		height: 24px;
		margin-top: 2px;
		border: 1px solid #5a7cb4;
		background: #cfdff5;
		box-shadow: inset 0 0 0 4px #9dbbe4, inset 0 0 0 5px #5a7cb4;
	}

	.vruler {
		display: flex;
		flex-direction: column;
		align-items: center;
		width: 12px;
		margin: 2px 0 0 6px;
		color: #44587c;
		font-size: 10px;
		line-height: 12px;
	}

	.vruler span {
		width: 12px;
		height: 16px;
		writing-mode: vertical-rl;
		transform: rotate(180deg);
		text-align: center;
	}

	.vruler .margin {
		height: 13px;
		background: #c0d3ee;
	}

	.vruler .scale {
		display: flex;
		flex-direction: column;
		padding-bottom: 2px;
		background: #fff;
	}

	.vruler .tail {
		height: 14px;
		background: #b9cee9;
	}

	.canvas {
		position: relative;
		flex: 1;
		min-width: 0;
		padding-left: 42px;
	}

	.swoosh {
		position: absolute;
		left: 0;
		top: 25px;
		width: 500px;
		height: 540px;
	}

	.hruler {
		position: relative;
		display: flex;
		width: 85px;
		margin: 8px 0 13px;
		font-size: 10px;
		line-height: 11px;
		color: #44587c;
	}

	.edge {
		flex: 1;
		margin-left: -3px;
		background: #b7cdeb;
	}

	.edge + .scale + .edge {
		margin-left: 0;
	}

	.hruler .scale {
		display: flex;
		padding-right: 7px;
		background: #fff;
	}

	.hruler .scale span {
		width: 15px;
		text-align: center;
	}

	.indent {
		position: absolute;
		left: 3px;
		top: -4px;
	}

	.right-indent {
		position: absolute;
		left: 70px;
		top: 4px;
	}

	.pages {
		position: relative;
		display: grid;
		grid-template-columns: repeat(auto-fill, 83px);
		gap: 6px;
	}

	.page {
		background: #fff;
		outline: 1px solid #4c6380;
		box-shadow: 2px 2px 4px 2px #465f80;
		shape-rendering: crispEdges;
	}

	.scroll {
		display: flex;
		flex-direction: column;
		width: 17px;
		background: #9dbae2;
	}

	.split {
		height: 2px;
		margin: 4px 3px 3px;
		background: #2b4a7c;
	}

	.toggle {
		height: 16px;
		background: #c6d3e6;
	}

	.step {
		height: 18px;
		background: #819dc4;
	}

	.thumb {
		display: flex;
		flex: 1;
		flex-direction: column;
		align-items: center;
		justify-content: center;
		gap: 1px;
		margin: 0 1px;
		border: 1px solid #6d86ac;
		border-radius: 2px;
		background: linear-gradient(90deg, #fff, #e2e9f2 50%, #b8c6da);
	}

	.thumb i {
		width: 8px;
		height: 1px;
		background: #6f86a8;
	}

	.browse {
		height: 17px;
		background: #a9c7f3;
	}

	.status {
		display: flex;
		align-items: stretch;
		height: 22px;
		border-top: 1px solid #567db0;
		background: linear-gradient(#e3effe 0, #cbdff9 35%, #b0cdf4 45%, #d5e6fc 100%);
		box-sizing: border-box;
	}

	.status > button {
		padding: 0 8px;
		border-right: 1px solid #9dbce4;
	}

	.status .muted {
		color: #8d9bb0;
	}

	.status .lang {
		gap: 16px;
	}

	.views {
		display: flex;
		margin: 1px 0 1px auto;
		border: 1px solid #7b9acb;
	}

	.views button {
		width: 18px;
	}

	.views .on {
		background: #fbd68c;
	}

	.status .percent {
		width: 39px;
		padding: 0;
		border: 0;
	}

	.zoom {
		display: flex;
		align-items: center;
		padding: 0 5px 0 6px;
	}

	.zoom input {
		width: 102px;
		height: 16px;
		appearance: none;
		background: linear-gradient(#e5effc, #e5effc) center / 100% 1px no-repeat, linear-gradient(#e5effc, #e5effc) center / 1px 8px no-repeat;
	}

	.zoom input::-webkit-slider-thumb {
		width: 9px;
		height: 12px;
		appearance: none;
		border: 1px solid #5d7397;
		border-radius: 1px 1px 4px 4px;
		background: #e4eefc;
	}

	.views,
	.percent,
	.zoom {
		background: #a6c4ee;
	}

	.taskbar {
		display: flex;
		height: 40px;
		background: #1c1c1c;
		color: #fff;
	}

	.start {
		width: 48px;
	}

	.search {
		display: flex;
		align-items: center;
		gap: 10px;
		width: 289px;
		padding-left: 12px;
		background: #f2f2f2;
		box-sizing: border-box;
	}

	.search input {
		flex: 1;
		min-width: 0;
		font-size: 14px;
	}

	.search input::placeholder {
		color: #333;
		opacity: 1;
	}

	.apps {
		display: flex;
		gap: 1px;
	}

	.apps button {
		width: 48px;
	}

	.open {
		background: linear-gradient(#b9b9b9, #b9b9b9) bottom / 40px 2px no-repeat;
	}

	.current {
		border-bottom: 2px solid #c4c4c4;
		background: #4a4a4a;
	}

	.tray {
		display: flex;
		align-items: center;
		gap: 9px;
		margin-left: auto;
		padding-right: 15px;
	}

	.weather {
		gap: 7px;
		margin-right: 20px;
		font-size: 13px;
	}

	.clock {
		flex-direction: column;
		margin-right: 8px;
		line-height: 18px;
	}
</style>
